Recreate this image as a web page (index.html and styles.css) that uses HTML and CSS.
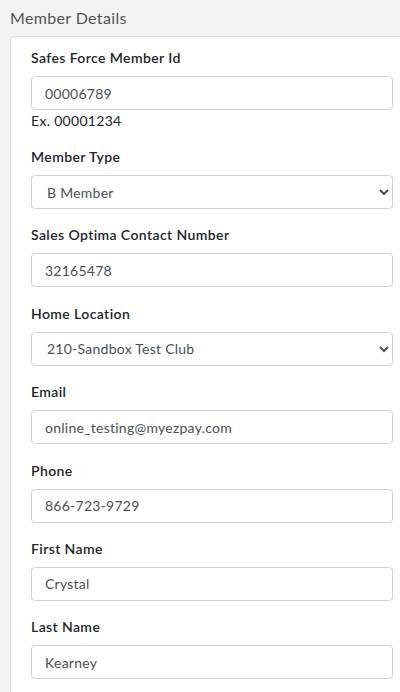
FILE: index.html
```html
<!DOCTYPE html>
<html lang="en">
<head>
<meta charset="utf-8">
<title>Member Details</title>
<link rel="stylesheet" href="styles.css">
</head>
<body>
<div class="page">
  <h2 class="title">Member Details</h2>
  <div class="card">
    <div class="group">
      <label class="label">Safes Force Member Id</label>
      <input class="control" type="text" value="00006789">
      <div class="help">Ex. 00001234</div>
    </div>
    <div class="group">
      <label class="label">Member Type</label>
      <select class="control select"><option>B Member</option></select>
    </div>
    <div class="group">
      <label class="label">Sales Optima Contact Number</label>
      <input class="control" type="text" value="32165478">
    </div>
    <div class="group">
      <label class="label">Home Location</label>
      <select class="control select"><option>210-Sandbox Test Club</option></select>
    </div>
    <div class="group">
      <label class="label">Email</label>
      <input class="control" type="text" value="online_testing@myezpay.com">
    </div>
    <div class="group">
      <label class="label">Phone</label>
      <input class="control" type="text" value="866-723-9729">
    </div>
    <div class="group">
      <label class="label">First Name</label>
      <input class="control" type="text" value="Crystal">
    </div>
    <div class="group">
      <label class="label">Last Name</label>
      <input class="control" type="text" value="Kearney">
    </div>
  </div>
</div>
</body>
</html>
```
FILE: styles.css
```css
html, body {
  margin: 0;
  padding: 0;
  background: #f3f3f3;
  font-family: Lato, "Open Sans", sans-serif;
  color: #212529;
  overflow: hidden;
}
.page {
  padding-left: 10px;
}
.title {
  margin: 0;
  height: 36px;
  line-height: 36px;
  font-size: 16px;
  font-weight: 400;
  letter-spacing: 0.35px;
  color: #555;
}
.card {
  background: #fff;
  border: 1px solid #dcdcdc;
  border-right: none;
  border-radius: 4px 0 0 0;
  padding: 11px 8px 20px 20px;
  margin-right: -10px;
}
.group {
  display: flex;
  flex-direction: column;
  margin-bottom: 16.4px;
}
.label {
  font-size: 14px;
  line-height: 20px;
  font-weight: 600;
  letter-spacing: 0.4px;
  color: #212529;
  margin-bottom: 8px;
}
.control {
  box-sizing: border-box;
  width: 362px;
  height: 34px;
  border: 1px solid #ced4da;
  border-radius: 4px;
  padding: 0 13px;
  font-family: inherit;
  font-size: 14px;
  letter-spacing: 0.25px;
  color: #495057;
  background: #fff;
  margin: 0;
}
.select {
  padding-left: 11px;
}
.help {
  font-size: 14px;
  line-height: 20px;
  letter-spacing: 0.3px;
  color: #212529;
  margin-top: 1px;
  margin-bottom: -0.4px;
}
```
